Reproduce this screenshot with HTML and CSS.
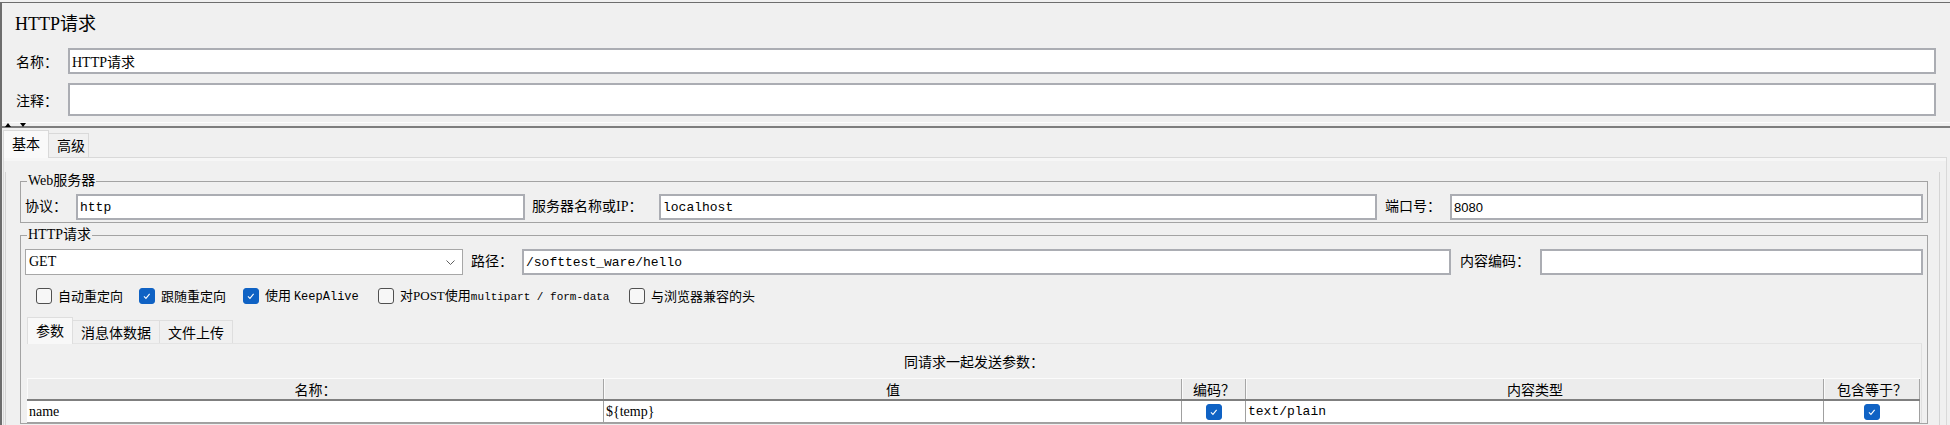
FILE: index.html
```html
<!DOCTYPE html>
<html lang="zh-CN">
<head>
<meta charset="utf-8">
<title>HTTP请求</title>
<link rel="stylesheet" href="styles.css">
</head>
<body>
<div class="frame">
  <div class="title">HTTP请求</div>
  <div class="frow">
    <span class="flabel">名称：</span>
    <div class="field name-field">HTTP请求</div>
  </div>
  <div class="frow comment-row">
    <span class="flabel">注释：</span>
    <div class="field comment-field"></div>
  </div>
  <div class="splitter">
    <div class="sp-light"></div>
    <div class="sp-dark"></div>
    <span class="arrow up"></span>
    <span class="arrow down"></span>
  </div>
  <div class="tabs">
    <div class="tab active">基本</div>
    <div class="tab last">高级</div>
  </div>
  <div class="panel">
    <div class="scroll">
      <fieldset class="group web">
        <legend>Web服务器</legend>
        <div class="row">
          <span class="lbl w-proto">协议：</span>
          <div class="field mono w-proto-in">http</div>
          <span class="lbl w-host">服务器名称或IP：</span>
          <div class="field mono w-host-in">localhost</div>
          <span class="lbl w-port">端口号：</span>
          <div class="field sans w-port-in">8080</div>
        </div>
      </fieldset>
      <fieldset class="group http">
        <legend>HTTP请求</legend>
        <div class="row">
          <div class="combo"><span>GET</span>
            <svg class="chev" width="9" height="5" viewBox="0 0 9 5"><polyline points="0.5,0.5 4.5,4.5 8.5,0.5" fill="none" stroke="#5f5f5f" stroke-width="1"/></svg>
          </div>
          <span class="lbl w-path">路径：</span>
          <div class="field mono w-path-in">/softtest_ware/hello</div>
          <span class="lbl w-enc">内容编码：</span>
          <div class="field w-enc-in"></div>
        </div>
        <div class="checks">
          <div class="chk"><span class="box"></span><span>自动重定向</span></div>
          <div class="chk"><span class="box on"><svg width="16" height="16" viewBox="0 0 16 16"><polyline points="4.5,8.5 6.8,10.8 11,5.5" fill="none" stroke="#fff" stroke-width="1.2"/></svg></span><span>跟随重定向</span></div>
          <div class="chk"><span class="box on"><svg width="16" height="16" viewBox="0 0 16 16"><polyline points="4.5,8.5 6.8,10.8 11,5.5" fill="none" stroke="#fff" stroke-width="1.2"/></svg></span><span>使用 <span class="lat">KeepAlive</span></span></div>
          <div class="chk"><span class="box"></span><span>对<span class="lat2">POST</span>使用<span class="lat small">multipart / form-data</span></span></div>
          <div class="chk"><span class="box"></span><span>与浏览器兼容的头</span></div>
        </div>
        <div class="subtabs">
          <div class="stab active">参数</div>
          <div class="stab">消息体数据</div>
          <div class="stab">文件上传</div>
        </div>
        <div class="tpanel">
          <div class="caption">同请求一起发送参数：</div>
          <div class="table">
            <div class="thead">
              <div class="c">名称：</div>
              <div class="c">值</div>
              <div class="c">编码？</div>
              <div class="c">内容类型</div>
              <div class="c">包含等于？</div>
            </div>
            <div class="trow">
              <div class="c serif">name</div>
              <div class="c serif">${temp}</div>
              <div class="c mid"><span class="box on"><svg width="16" height="16" viewBox="0 0 16 16"><polyline points="4.5,8.5 6.8,10.8 11,5.5" fill="none" stroke="#fff" stroke-width="1.2"/></svg></span></div>
              <div class="c mono">text/plain</div>
              <div class="c mid"><span class="box on"><svg width="16" height="16" viewBox="0 0 16 16"><polyline points="4.5,8.5 6.8,10.8 11,5.5" fill="none" stroke="#fff" stroke-width="1.2"/></svg></span></div>
            </div>
          </div>
        </div>
      </fieldset>
    </div>
  </div>
</div>
</body>
</html>
```

FILE: styles.css
```css
* { box-sizing: border-box; }
html, body { margin: 0; padding: 0; }
body {
  width: 1950px;
  height: 425px;
  overflow: hidden;
  background: #f0f0f0;
  color: #000;
  font-family: "Liberation Serif", "Noto Sans CJK SC", serif;
  font-size: 14px;
}
.frame {
  margin-top: 2px;
  height: 423px;
  border-top: 1px solid #6d6d6d;
  border-left: 2px solid #6d6d6d;
}
.title {
  height: 45px;
  padding: 9px 0 0 13px;
  font-size: 18px;
  line-height: 24px;
}
.frow {
  display: flex;
  align-items: center;
  padding: 0 14px;
}
.flabel {
  width: 52px;
  font-family: "Noto Sans CJK SC", sans-serif;
  font-size: 14px;
  line-height: 18px;
}
.field {
  background: #fff;
  border: 2px solid #abadb3;
  height: 26px;
  display: flex;
  align-items: center;
  padding-left: 2px;
  white-space: nowrap;
  font-size: 14px;
}
.name-field { flex: 1; }
.comment-row { margin-top: 9px; }
.comment-field { flex: 1; height: 33px; }
.mono { font-family: "Liberation Mono", "Noto Sans CJK SC", monospace; font-size: 13px; }
.sans { font-family: "Liberation Sans", sans-serif; font-size: 13px; }
.serif { font-family: "Liberation Serif", serif; font-size: 14px; }

.splitter {
  position: relative;
  height: 14px;
  padding-top: 6px;
}
.sp-light { height: 1px; background: #fcfcfc; }
.sp-dark { margin-top: 3px; height: 2px; background: #7d7d7d; }
.arrow {
  position: absolute;
  top: 7px;
  width: 0;
  height: 0;
  border-left: 3px solid transparent;
  border-right: 3px solid transparent;
}
.arrow.up { left: 3px; border-bottom: 4px solid #000; }
.arrow.down { left: 18px; border-top: 4px solid #000; }

.tabs {
  display: flex;
  align-items: flex-end;
  height: 27px;
  padding-left: 1px;
}
.tab {
  height: 24px;
  padding: 0 8px;
  border: 1px solid #d9d9d9;
  border-bottom: none;
  font-family: "Noto Sans CJK SC", sans-serif;
  font-size: 14px;
  line-height: 22px;
  background: #f0f0f0;
}
.tab + .tab { border-left: none; }
.tab.last { padding-right: 3px; }
.tab.active {
  height: 28px;
  margin-bottom: -1px;
  line-height: 25px;
  background: #f9f9f9;
  position: relative;
  z-index: 1;
}

.panel {
  margin: 0 3px 0 1px;
  height: 268px;
  padding-top: 3px;
  border-top: 1px solid #d9d9d9;
  border-left: 1px solid #d9d9d9;
  border-right: 1px solid #d9d9d9;
  background: #f0f0f0;
  box-shadow: inset 0 3px 0 #f6f6f6;
}
.scroll {
  height: 100%;
  margin: 0 6px 0 1px;
  padding: 0 11px 0 14px;
  border-left: 1px solid #d4d4d4;
  border-right: 1px solid #d4d4d4;
}

.group {
  margin: 0;
  min-width: 0;
  border: 1px solid #a3a3a3;
  padding: 4px 3px 2px 4px;
}
.group legend {
  margin-left: 2px;
  padding: 0 1px;
  font-size: 14px;
  line-height: 18px;
}
.web { margin-top: 11px; }
.http { margin-top: 3px; padding-top: 5px; padding-bottom: 0; }

.row {
  display: flex;
  align-items: center;
  height: 26px;
}
.lbl {
  flex: none;
  font-size: 14px;
  line-height: 18px;
  white-space: nowrap;
}
.w-proto { width: 51px; }
.w-proto-in { width: 449px; }
.w-host { width: 134px; padding-left: 7px; }
.w-host-in { width: 718px; }
.w-port { width: 73px; padding-left: 8px; }
.w-port-in { width: 473px; }
.w-path { width: 59px; padding-left: 8px; }
.w-path-in { width: 929px; }
.w-enc { width: 89px; padding-left: 9px; }
.w-enc-in { width: 383px; }

.combo {
  flex: none;
  width: 438px;
  height: 26px;
  background: #fff;
  border: 1px solid #a7a7a7;
  display: flex;
  align-items: center;
  justify-content: space-between;
  padding: 0 7px 0 3px;
  font-size: 14px;
}
.chev { display: block; }

.checks {
  margin-top: 12px;
  padding-left: 11px;
  height: 16px;
  display: grid;
  grid-template-columns: 103px 104px 135px 251px auto;
  align-items: center;
}
.chk {
  display: flex;
  align-items: center;
  gap: 6px;
  font-family: "Noto Sans CJK SC", sans-serif;
  font-size: 13px;
  line-height: 16px;
  white-space: nowrap;
}
.lat { font-family: "Liberation Mono", monospace; font-size: 12px; }
.lat.small { font-size: 11px; }
.lat2 { font-family: "Liberation Serif", serif; font-size: 13px; }
.box {
  flex: none;
  width: 16px;
  height: 16px;
  border: 1px solid #505050;
  border-radius: 3px;
  background: #f7f7f7;
  display: inline-flex;
  align-items: center;
  justify-content: center;
}
.box.on { background: #0f62c4; border-color: #0f62c4; }
.box svg { display: block; }

.subtabs {
  margin: 14px 0 0 2px;
  height: 26px;
  display: flex;
  align-items: flex-end;
}
.stab {
  height: 23px;
  padding: 0 8px;
  border: 1px solid #dedede;
  border-left: none;
  border-bottom: none;
  font-family: "Noto Sans CJK SC", sans-serif;
  font-size: 14px;
  line-height: 22px;
  background: #f0f0f0;
}
.stab.active {
  height: 27px;
  margin-bottom: -1px;
  border-left: 1px solid #dedede;
  background: #f8f8f8;
  line-height: 25px;
  position: relative;
  z-index: 1;
}

.tpanel {
  margin: 0 2px;
  border-top: 1px solid #e4e4e4;
  border-right: 1px solid #e0e0e0;
}
.caption {
  height: 34px;
  text-align: center;
  font-family: "Noto Sans CJK SC", sans-serif;
  font-size: 14px;
  line-height: 34px;
}
.table { width: 1893px; }
.thead, .trow {
  display: grid;
  grid-template-columns: 577px 578px 64px 578px 96px;
}
.thead {
  height: 23px;
  border-top: 1px solid #fbfbfb;
  border-bottom: 2px solid #7f7f7f;
  background: #ececec;
}
.thead .c {
  border-left: 1px solid #fafafa;
  border-right: 1px solid #a6a6a6;
  text-align: center;
  font-family: "Noto Sans CJK SC", sans-serif;
  font-size: 14px;
  line-height: 20px;
}
.trow {
  height: 22px;
  background: #fff;
  border-bottom: 1px solid #a0a0a0;
}
.trow .c {
  border-right: 1px solid #a0a0a0;
  padding-left: 2px;
  line-height: 21px;
  white-space: nowrap;
}
.trow .c.mid {
  display: flex;
  align-items: center;
  justify-content: center;
  padding-left: 0;
}
```
